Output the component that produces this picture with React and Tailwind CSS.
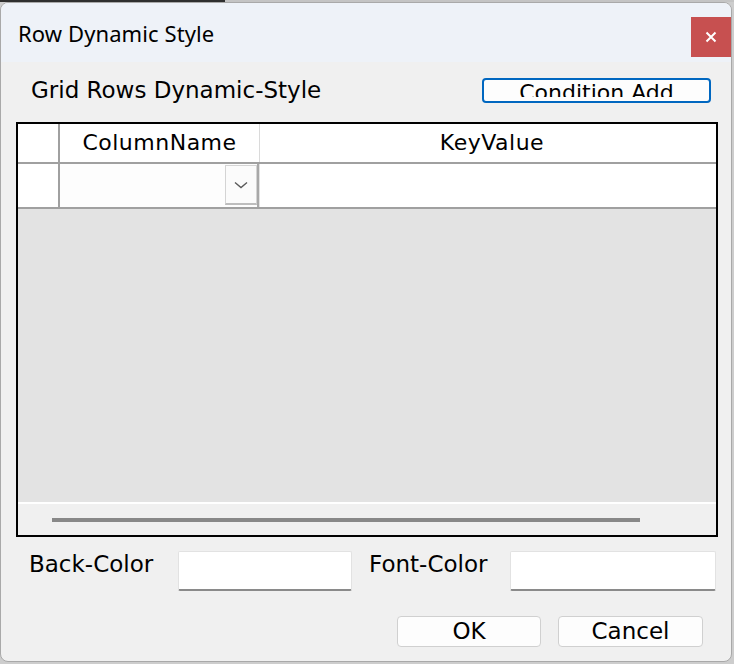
import React from "react";

const body = { fontFamily: '"DejaVu Sans", "Noto Sans CJK KR", sans-serif' };

function ComboCell() {
  return (
    <div className="flex h-full w-[199px] bg-[#fdfdfd]">
      <div className="flex-1" />
      <div className="mt-[1px] flex h-[40px] w-[32px] items-center justify-center border border-b-2 border-[#d4d4d4] border-b-[#bdbdbd] bg-[#fbfbfb]">
        <svg width="16" height="10" viewBox="0 0 16 10" fill="none">
          <path d="M2 2.5 L8 7.5 L14 2.5" stroke="#5a5a5a" strokeWidth="1.4" />
        </svg>
      </div>
      <div className="w-[2px] bg-[#a8a8a8]" />
    </div>
  );
}

export default function App() {
  return (
    <div className="flex h-[664px] w-[734px] flex-col bg-[#cdcdcd]">
      <div className="flex h-[2px] shrink-0">
        <div className="w-[225px] bg-[#2f2f2f]" />
        <div className="flex-1 bg-[#c4c4c4]" />
      </div>

      <div className="flex h-[660px] w-[732px] flex-col overflow-hidden rounded-[8px] border border-[#a9a9a9] bg-[#f0f0f0]">
        {/* title bar */}
        <div className="flex h-[59px] shrink-0 items-start justify-between bg-[#eef2f8]">
          <span
            className="mt-[16px] pl-[17px] text-[22px] leading-[28px] tracking-[0.1px] text-black"
            style={{ fontFamily: '"Noto Sans", "Open Sans", sans-serif' }}
          >
            Row Dynamic Style
          </span>
          <div className="mt-[14px] flex h-[40px] w-[40px] items-center justify-center bg-[#c75050]">
            <svg width="12" height="12" viewBox="0 0 12 12">
              <path d="M1.5 1.5 L10.5 10.5 M10.5 1.5 L1.5 10.5" stroke="#fff" strokeWidth="2" />
            </svg>
          </div>
        </div>

        <div className="flex flex-col pl-[15px] text-black" style={body}>
          {/* header row */}
          <div className="mt-[16px] flex h-[25px] w-[702px] items-center justify-between">
            <span className="pl-[15px] text-[23px] leading-[23px]">Grid Rows Dynamic-Style</span>
            <div className="mr-[7px] h-[25px] w-[229px] rounded-[4px] border-2 border-[#0067c0] bg-[#fdfdfd]">
              {/* the label is clipped at the bottom, as in the original dialog */}
              <div className="h-[17px] overflow-hidden pt-[2px] text-center text-[22px] leading-[22px]">
                Condition Add
              </div>
            </div>
          </div>

          {/* grid */}
          <div className="mt-[19px] flex h-[415px] w-[702px] flex-col border-2 border-black">
            <div className="flex h-[38px] shrink-0 bg-white text-[22px] tracking-[0.5px]">
              <div className="w-[40px]" />
              <div className="w-[2px] bg-[#a0a0a0]" />
              <div className="flex w-[199px] items-center justify-center leading-[22px]">ColumnName</div>
              <div className="w-[1px] bg-[#dadada]" />
              <div className="flex flex-1 items-center justify-center pl-[8px] leading-[22px]">KeyValue</div>
            </div>
            <div className="h-[2px] shrink-0 bg-[#a0a0a0]" />
            <div className="flex h-[43px] shrink-0 bg-white">
              <div className="w-[40px]" />
              <div className="w-[2px] bg-[#a0a0a0]" />
              <ComboCell />
              <div className="w-[1px] bg-[#e2e2e2]" />
              <div className="flex-1" />
            </div>
            <div className="h-[2px] shrink-0 bg-[#a0a0a0]" />
            <div className="h-[293px] shrink-0 bg-[#e3e3e3]" />
            <div className="h-[2px] shrink-0 bg-white" />
            <div className="flex flex-1 items-start bg-[#f0f0f0] pl-[34px] pr-[76px] pt-[14px]">
              <div className="h-[4px] flex-1 bg-[#888888]" />
            </div>
          </div>

          {/* colors */}
          <div className="mt-[14px] flex h-[40px] items-start text-[23px] leading-[23px]">
            <span className="ml-[13px] mt-[2px] w-[149px]">Back-Color</span>
            <div className="h-[40px] w-[174px] rounded-[2px] border border-b-2 border-[#e2e2e2] border-b-[#8a8a8a] bg-white" />
            <span className="ml-[17px] mt-[2px] w-[141px]">Font-Color</span>
            <div className="h-[40px] w-[206px] rounded-[2px] border border-b-2 border-[#e2e2e2] border-b-[#8a8a8a] bg-white" />
          </div>

          {/* buttons */}
          <div className="mt-[25px] flex w-[702px] justify-end gap-[17px] pr-[15px] text-[23px] leading-[23px]">
            <div className="flex h-[31px] w-[144px] items-center justify-center rounded-[4px] border border-[#d0d0d0] bg-[#fdfdfd]">
              OK
            </div>
            <div className="flex h-[31px] w-[145px] items-center justify-center rounded-[4px] border border-[#d0d0d0] bg-[#fdfdfd]">
              Cancel
            </div>
          </div>
        </div>
      </div>
    </div>
  );
}
